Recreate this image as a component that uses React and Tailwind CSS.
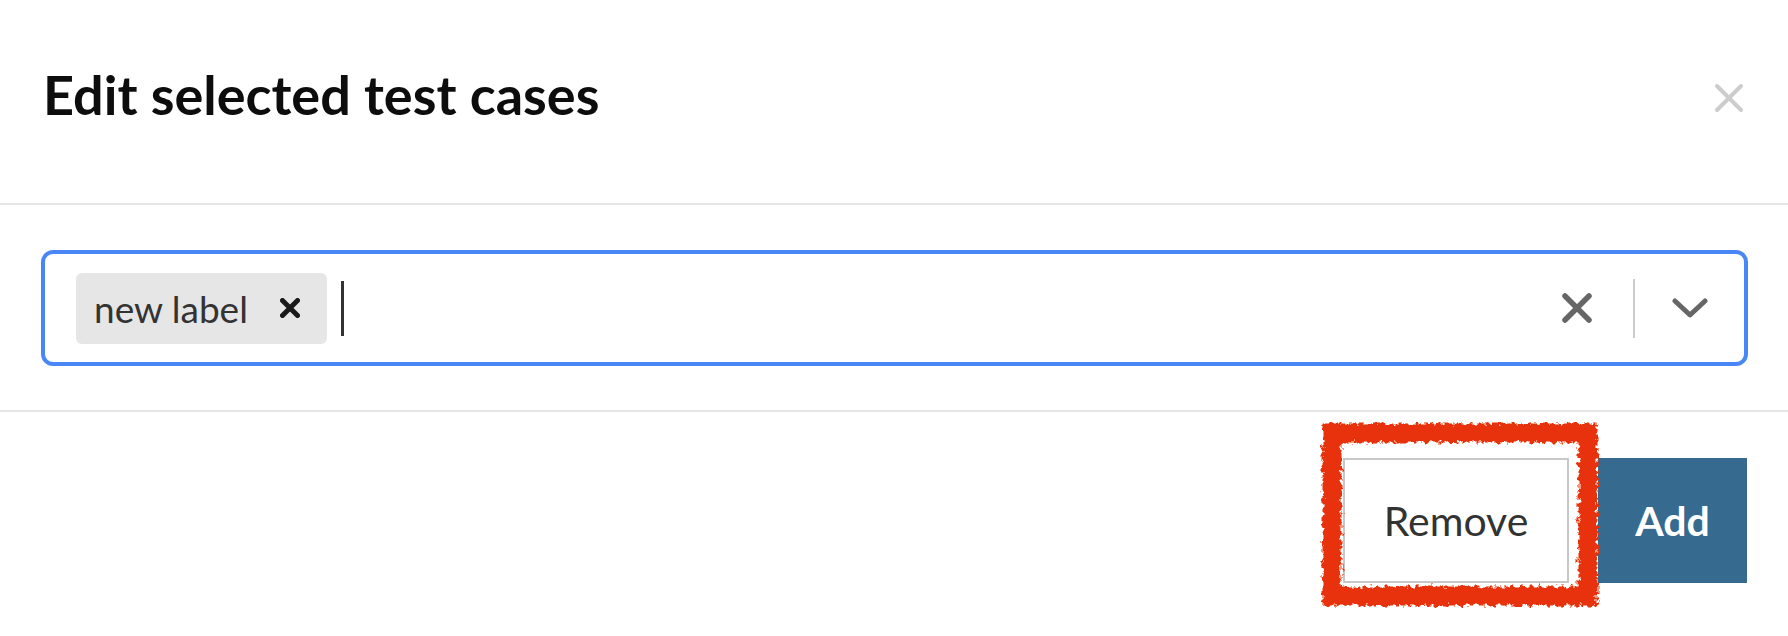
import React from 'react';

const font = { fontFamily: 'Lato, "Open Sans", sans-serif' };

// Thin "x" used in the header and the chip / clear buttons
const Cross = ({ size, stroke, color }) => (
  <svg width={size} height={size} viewBox="0 0 32 32" fill="none">
    <path d="M4 4 L28 28 M28 4 L4 28" stroke={color} strokeWidth={stroke} strokeLinecap="round" />
  </svg>
);

const Chevron = () => (
  <svg width="36" height="20" viewBox="0 0 36 20" fill="none">
    <path d="M3 3 L18 17 L33 3" stroke="#666666" strokeWidth="5" strokeLinecap="round" strokeLinejoin="round" />
  </svg>
);

// Hand-drawn red highlight around the Remove button
const Scribble = () => (
  <svg
    className="pointer-events-none absolute left-[-23px] top-[-36px]"
    width="280"
    height="186"
    viewBox="0 0 280 186"
  >
    <defs>
      <filter id="rough" x="-10%" y="-10%" width="120%" height="120%">
        <feTurbulence type="fractalNoise" baseFrequency="0.22" numOctaves="3" seed="5" />
        <feDisplacementMap in="SourceGraphic" scale="9" />
      </filter>
    </defs>
    <rect x="12" y="11" width="256" height="163" fill="none" stroke="#e8300a" strokeWidth="19" filter="url(#rough)" />
  </svg>
);

const App = () => {
  return (
    <div className="w-[1788px] h-[636px] bg-white overflow-hidden" style={font}>
      {/* Header */}
      <div className="flex items-start justify-between h-[203px] pt-[68px] pl-[43px] pr-[43px]">
        <h1 className="text-[54px] leading-none font-bold text-[#0d0d0d]">Edit selected test cases</h1>
        <button className="mt-[14px]">
          <Cross size={32} stroke={4} color="#cccccc" />
        </button>
      </div>
      <div className="h-[2px] bg-[#e6e6e6]" />

      {/* Body */}
      <div className="pt-[45px] pb-[44px] pl-[41px] pr-[40px]">
        <div className="flex items-center h-[116px] border-[4px] border-[#4a87f6] rounded-[12px] pl-[31px] pr-[36px]">
          <div className="flex items-center h-[71px] w-[251px] rounded-[6px] bg-[#e6e6e6] pl-[18px]">
            <span className="text-[37px] text-[#333333] leading-none">new label</span>
            <span className="ml-[32px]">
              <Cross size={20} stroke={8} color="#1a1a1a" />
            </span>
          </div>
          <div className="ml-[14px] w-[3px] h-[55px] bg-[#333333]" />
          <div className="flex-1" />
          <Cross size={32} stroke={5.5} color="#666666" />
          <div className="ml-[40px] w-[2px] h-[59px] bg-[#cccccc]" />
          <div className="ml-[37px]">
            <Chevron />
          </div>
        </div>
      </div>
      <div className="h-[2px] bg-[#e6e6e6]" />

      {/* Footer */}
      <div className="flex justify-end gap-[29px] pt-[46px] pr-[41px]">
        <div className="relative">
          <button className="w-[226px] h-[125px] border-2 border-[#c8c8c8] bg-white text-[41px] text-[#333333]">
            Remove
          </button>
          <Scribble />
        </div>
        <button className="w-[149px] h-[125px] bg-[#366a8f] text-[41px] font-bold text-white">Add</button>
      </div>
    </div>
  );
};

export default App;
